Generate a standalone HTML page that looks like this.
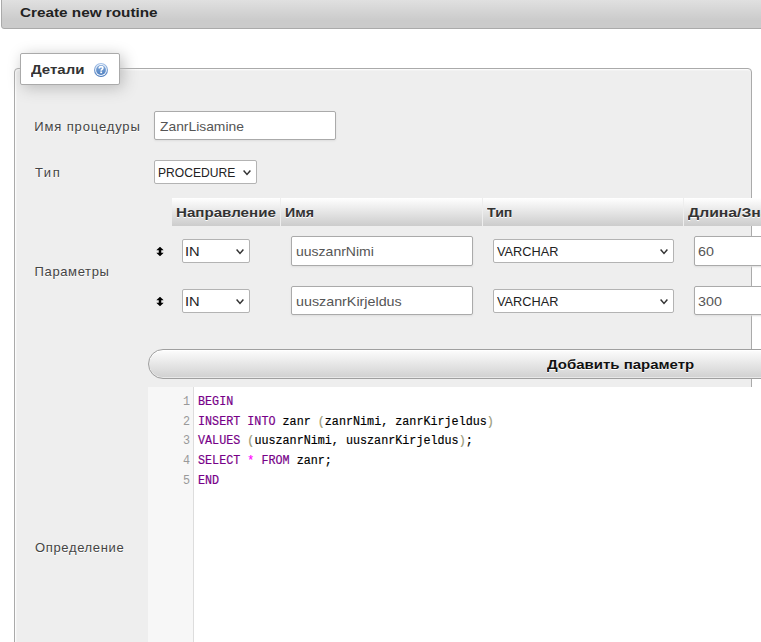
<!DOCTYPE html>
<html><head><meta charset="utf-8">
<style>
*{box-sizing:border-box;margin:0;padding:0}
html,body{width:761px;height:642px;overflow:hidden;background:#fff}
body{position:relative;font-family:"Liberation Sans",sans-serif;font-size:13px;color:#444}
.a{position:absolute}
.t{position:absolute;white-space:nowrap;line-height:13px;font-size:13px;transform-origin:0 0}
.b{font-weight:bold}
.sh{text-shadow:0 1px 0 #fff}
#title{left:1px;top:-2px;width:800px;height:31px;border:1px solid #aaa;border-radius:0 0 0 3px;background:linear-gradient(#e1e1e1 0%,#cbcbcb 73%,#cbcbcb 100%)}
#fs{left:14px;top:68px;width:738px;height:700px;border:1px solid #aaa;border-radius:4px 4px 0 0;background:#eee;box-shadow:1px 1px 2px #fff inset}
#legend{left:20px;top:53px;width:100px;height:32px;border:1px solid #aaa;border-radius:2px;background:#fff;box-shadow:3px 3px 15px #bbb}
.inp{position:absolute;background:#fff;border:1px solid #aaa;border-radius:2px;box-shadow:0 1px 2px #ddd}
.sel{position:absolute;background:#fff;border:1px solid #b3b3b3;border-radius:2px}
.th{position:absolute;top:198px;height:28px;background:linear-gradient(#fff,#ccc)}
#btn{left:148px;top:349px;width:700px;height:30px;border:1px solid #9f9f9f;border-radius:15px;background:linear-gradient(#fdfdfd,#d0d0d0);box-shadow:inset 0 1px 0 #fff,inset 0 -1px 0 rgba(255,255,255,.5)}
#cm{left:148px;top:387px;width:700px;height:300px;background:#fff}
#gut{left:148px;top:387px;width:46px;height:300px;background:#f7f7f7;border-right:1px solid #ddd}
.code{position:absolute;font-family:"Liberation Mono",monospace;font-size:12.3px;line-height:14px;white-space:pre;color:#000;-webkit-text-stroke:0.18px currentColor;transform:scaleX(0.9545);transform-origin:0 0}
.ln{position:absolute;font-family:"Liberation Mono",monospace;font-size:12.3px;line-height:14px;color:#999;text-align:right;width:20px;transform:scaleX(0.9545);transform-origin:100% 0}
.k{color:#708}.br{color:#997}.op{color:#f0f}
</style></head><body>
<div id="title" class="a"></div>
<span class="t b" style="left:20px;top:6px;color:#222;transform:scaleX(1.176)">Create new routine</span>

<div id="fs" class="a"></div>
<div id="legend" class="a"></div>
<span class="t sh b" style="left:31px;top:62.5px;color:#333;transform:scaleX(1.153)">Детали</span>
<svg class="a" style="left:93px;top:62px" width="16" height="16" viewBox="93 62 16 16">
<defs><linearGradient id="g1" x1="0" y1="0" x2="0" y2="1"><stop offset="0" stop-color="#a9c5ea"/><stop offset="1" stop-color="#4677ba"/></linearGradient>
<linearGradient id="g2" x1="0" y1="0" x2="0" y2="1"><stop offset="0" stop-color="#80a8da"/><stop offset="1" stop-color="#4f80c0"/></linearGradient></defs>
<circle cx="101" cy="70" r="7" fill="url(#g1)"/>
<circle cx="101" cy="70" r="5.9" fill="#f2f6fc"/>
<circle cx="101" cy="70" r="4.9" fill="url(#g2)"/>
<path d="M99.2 68.4 Q99.2 66.6 101.1 66.6 Q102.9 66.6 102.9 68.1 Q102.9 69 101.9 69.5 Q101.2 69.9 101.2 70.8" stroke="#fff" stroke-width="1.6" fill="none"/>
<rect x="100.3" y="71.5" width="1.8" height="1.7" fill="#fff"/>
</svg>

<span class="t sh" style="left:34.3px;top:120px;letter-spacing:0.86px">Имя процедуры</span>
<div class="inp" style="left:154px;top:111px;width:182px;height:29px"></div>
<span class="t" style="left:159.5px;top:120px;color:#555;transform:scaleX(1.065)">ZanrLisamine</span>

<span class="t sh" style="left:35px;top:166px;letter-spacing:1.5px">Тип</span>
<div class="sel" style="left:154px;top:160px;width:103px;height:24px"></div>
<span class="t" style="left:157.8px;top:166px;color:#222;transform:scaleX(0.93)">PROCEDURE</span>

<span class="t sh" style="left:34.6px;top:264.5px;letter-spacing:0.62px">Параметры</span>

<div class="th" style="left:172px;width:108px"></div>
<div class="th" style="left:281px;width:201px"></div>
<div class="th" style="left:483px;width:200px"></div>
<div class="th" style="left:684px;width:100px"></div>
<span class="t sh b" style="left:175.6px;top:206px;color:#333;transform:scaleX(1.163)">Направление</span>
<span class="t sh b" style="left:284.6px;top:206px;color:#333;transform:scaleX(1.09)">Имя</span>
<span class="t sh b" style="left:487.4px;top:206px;color:#333;transform:scaleX(1.092)">Тип</span>
<span class="t sh b" style="left:688px;top:206px;color:#333;transform:scaleX(1.21)">Длина/Значения</span>

<div class="sel" style="left:182px;top:239px;width:68px;height:24px"></div>
<span class="t" style="left:185px;top:245px;color:#222;transform:scaleX(1.13)">IN</span>
<div class="inp" style="left:291px;top:236px;width:182px;height:30px"></div>
<span class="t" style="left:295.7px;top:245px;color:#555;transform:scaleX(1.078)">uuszanrNimi</span>
<div class="sel" style="left:493px;top:239px;width:181px;height:24px"></div>
<span class="t" style="left:497.3px;top:245px;color:#222;transform:scaleX(0.98)">VARCHAR</span>
<div class="inp" style="left:694px;top:236px;width:120px;height:30px"></div>
<span class="t" style="left:698.2px;top:245px;color:#555;transform:scaleX(1.1)">60</span>

<div class="sel" style="left:182px;top:289px;width:68px;height:24px"></div>
<span class="t" style="left:185px;top:295px;color:#222;transform:scaleX(1.13)">IN</span>
<div class="inp" style="left:291px;top:286px;width:182px;height:29px"></div>
<span class="t" style="left:295.6px;top:295px;color:#555;transform:scaleX(1.10)">uuszanrKirjeldus</span>
<div class="sel" style="left:493px;top:289px;width:181px;height:24px"></div>
<span class="t" style="left:497.3px;top:295px;color:#222;transform:scaleX(0.98)">VARCHAR</span>
<div class="inp" style="left:694px;top:286px;width:120px;height:29px"></div>
<span class="t" style="left:698.2px;top:295px;color:#555;transform:scaleX(1.1)">300</span>

<svg class="a" style="left:242px;top:169px" width="10" height="7" viewBox="242 169 10 7"><path d="M243.6 170.6 L247.0 174.4 L250.4 170.6" stroke="#333" stroke-width="1.5" fill="none"/></svg>
<svg class="a" style="left:235px;top:248px" width="10" height="7" viewBox="235 248 10 7"><path d="M236.6 249.6 L240.0 253.4 L243.4 249.6" stroke="#333" stroke-width="1.5" fill="none"/></svg>
<svg class="a" style="left:659px;top:248px" width="10" height="7" viewBox="659 248 10 7"><path d="M660.6 249.6 L664.0 253.4 L667.4 249.6" stroke="#333" stroke-width="1.5" fill="none"/></svg>
<svg class="a" style="left:235px;top:298px" width="10" height="7" viewBox="235 298 10 7"><path d="M236.6 299.6 L240.0 303.4 L243.4 299.6" stroke="#333" stroke-width="1.5" fill="none"/></svg>
<svg class="a" style="left:659px;top:298px" width="10" height="7" viewBox="659 298 10 7"><path d="M660.6 299.6 L664.0 303.4 L667.4 299.6" stroke="#333" stroke-width="1.5" fill="none"/></svg>
<svg class="a" style="left:150px;top:242px" width="20" height="20" viewBox="150 242 20 20"><path d="M160 247 L156.8 250 L159 250 L159 253 L156.8 253 L160 256 L163.2 253 L161 253 L161 250 L163.2 250 Z" fill="#000" stroke="#000" stroke-width="0.5" stroke-linejoin="round"/></svg>
<svg class="a" style="left:150px;top:291.6px" width="20" height="20" viewBox="150 291.6 20 20"><path d="M160 296.6 L156.8 299.6 L159 299.6 L159 302.6 L156.8 302.6 L160 305.6 L163.2 302.6 L161 302.6 L161 299.6 L163.2 299.6 Z" fill="#000" stroke="#000" stroke-width="0.5" stroke-linejoin="round"/></svg>
<div id="btn" class="a"></div>
<span class="t sh b" style="left:546.7px;top:357.5px;color:#111;transform:scaleX(1.152)">Добавить параметр</span>

<div id="cm" class="a"></div>
<div id="gut" class="a"></div>

<div class="ln" style="left:170px;top:395px">1</div>
<div class="ln" style="left:170px;top:414.7px">2</div>
<div class="ln" style="left:170px;top:434.4px">3</div>
<div class="ln" style="left:170px;top:454.1px">4</div>
<div class="ln" style="left:170px;top:473.8px">5</div>
<div class="code" style="left:198px;top:395px"><span class="k">BEGIN</span></div>
<div class="code" style="left:198px;top:414.7px"><span class="k">INSERT</span> <span class="k">INTO</span> zanr <span class="br">(</span>zanrNimi, zanrKirjeldus<span class="br">)</span></div>
<div class="code" style="left:198px;top:434.4px"><span class="k">VALUES</span> <span class="br">(</span>uuszanrNimi, uuszanrKirjeldus<span class="br">)</span>;</div>
<div class="code" style="left:198px;top:454.1px"><span class="k">SELECT</span> <span class="op">*</span> <span class="k">FROM</span> zanr;</div>
<div class="code" style="left:198px;top:473.8px"><span class="k">END</span></div>

<span class="t sh" style="left:35px;top:541.3px;letter-spacing:0.65px">Определение</span>
</body></html>
